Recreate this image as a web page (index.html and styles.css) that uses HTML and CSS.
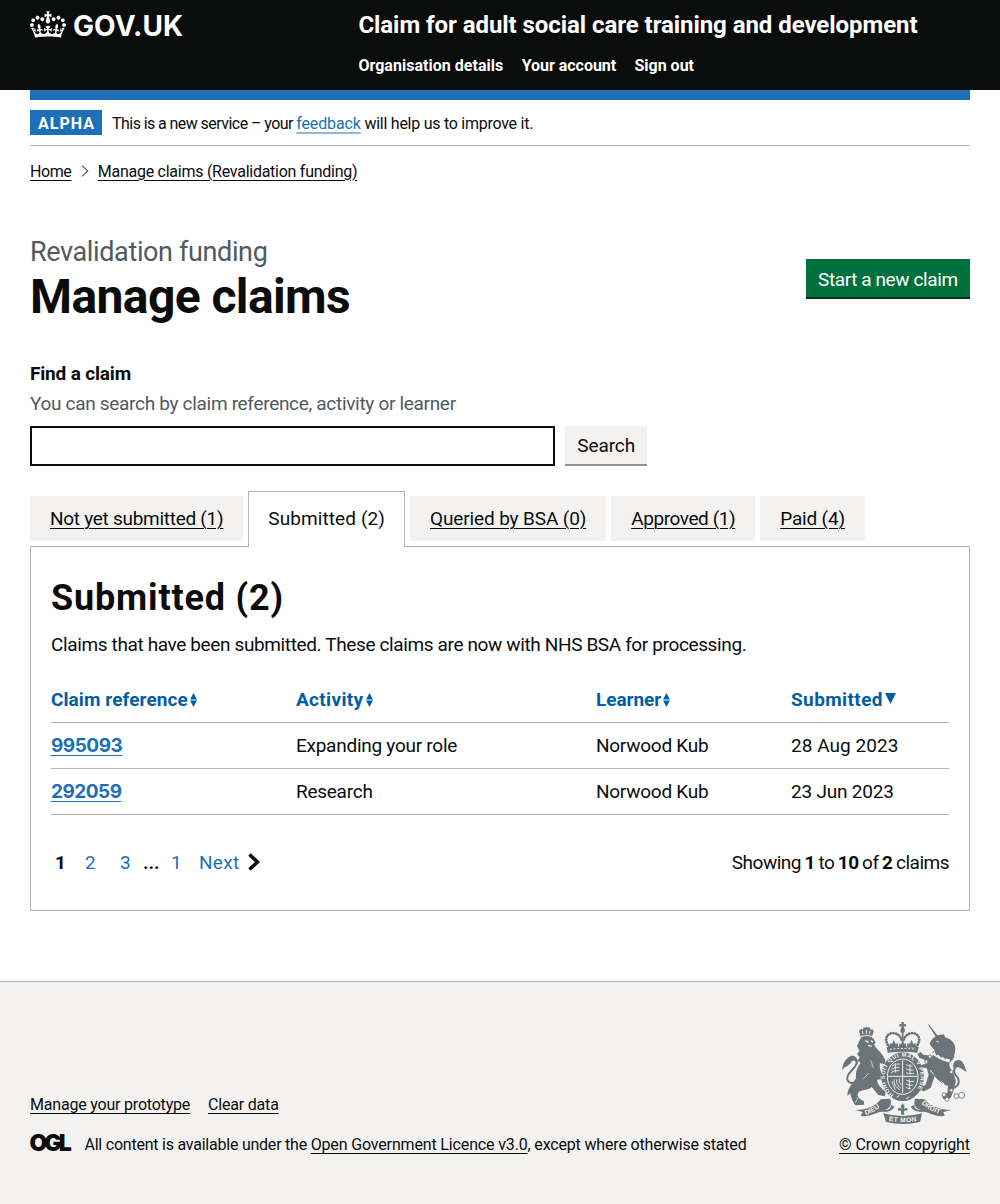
FILE: index.html
```html
<!DOCTYPE html>
<html lang="en">
<head>
<meta charset="utf-8">
<title>Manage claims</title>
<link rel="stylesheet" href="styles.css">
</head>
<body>
<header class="header">
  <div class="wrap header-inner">
    <a class="logo" href="#">
      <svg class="crown" viewBox="0 0 132 97" aria-hidden="true"><path d="M25 30.2c3.5 1.5 7.7-.2 9.1-3.7 1.5-3.6-.2-7.8-3.9-9.2-3.6-1.4-7.6.3-9.1 3.9-1.4 3.5.3 7.5 3.9 9zM9 39.5c3.6 1.5 7.8-.2 9.2-3.7 1.5-3.6-.2-7.8-3.9-9.1-3.6-1.5-7.6.2-9.1 3.8-1.4 3.5.3 7.5 3.8 9zM4.4 57.2c3.5 1.5 7.7-.2 9.1-3.8 1.5-3.6-.2-7.7-3.9-9.1-3.5-1.5-7.6.3-9.1 3.8-1.4 3.5.3 7.6 3.9 9.1zm38.3-21.4c3.5 1.5 7.7-.2 9.1-3.8 1.5-3.6-.2-7.7-3.9-9.1-3.6-1.5-7.6.3-9.1 3.8-1.3 3.6.4 7.7 3.9 9.1zm64.4-5.6c-3.6 1.5-7.8-.2-9.1-3.7-1.5-3.6.2-7.8 3.8-9.2 3.6-1.4 7.7.3 9.2 3.9 1.3 3.5-.4 7.5-3.9 9zm15.9 9.3c-3.6 1.5-7.7-.2-9.1-3.7-1.5-3.6.2-7.8 3.7-9.1 3.6-1.5 7.7.2 9.2 3.8 1.5 3.5-.3 7.5-3.8 9zm4.7 17.7c-3.6 1.5-7.8-.2-9.2-3.8-1.5-3.6.2-7.7 3.9-9.1 3.6-1.5 7.7.3 9.2 3.8 1.3 3.5-.4 7.6-3.9 9.1zM89.3 35.8c-3.6 1.5-7.8-.2-9.2-3.8-1.4-3.6.2-7.7 3.9-9.1 3.6-1.5 7.7.3 9.2 3.8 1.4 3.6-.3 7.7-3.9 9.1zM69.7 17.7l8.9 4.7V9.3l-8.9 2.8c-.2-.3-.5-.6-.9-.9L72.4 0H59.6l3.5 11.2c-.3.3-.6.5-.9.9l-8.8-2.8v13.1l8.8-4.7c.3.3.6.7.9.9l-5 15.4v.1c-.2.8-.4 1.6-.4 2.4 0 4.1 3.1 7.5 7 8.1h.2c.3 0 .7.1 1 .1.4 0 .7 0 1-.1h.2c4-.6 7.1-4.1 7.1-8.1 0-.8-.1-1.7-.4-2.4V34l-5.1-15.4c.4-.2.7-.6 1-.9zM66 92.8c16.9 0 32.8 1.1 47.1 3.2 4-16.9 8.9-26.7 14-33.5l-9.6-3.4c1 4.9 1.1 7.2 0 10.2-1.5-1.4-3-4.3-4.2-8.7L108.6 76c2.8-2 5-3.2 7.5-3.3-4.4 9.4-10 11.9-13.6 11.2-4.3-.8-6.3-4.6-5.6-7.9 1-4.7 5.7-5.9 8-.5 4.3-8.7-3-11.4-7.6-8.8 7.1-7.2 7.9-13.5 2.1-21.1-8 6.1-8.1 12.3-4.5 20.8-4.7-5.4-12.1-2.5-9.5 6.2 3.4-5.2 7.9-2 7.2 3.1-.6 4.3-6.4 7.8-13.5 7.2-10.3-.9-10.9-8-11.2-13.8 2.5-.5 7.1 1.8 11 7.3L80.2 60c-4.1 4.4-8 5.3-12.3 5.4 1.4-4.4 8-11.6 8-11.6H55.5s6.4 7.2 7.9 11.6c-4.2-.1-8-1-12.3-5.4l1.4 16.4c3.9-5.5 8.5-7.7 10.9-7.3-.3 5.8-.9 12.8-11.1 13.8-7.2.6-12.9-2.9-13.5-7.2-.7-5 3.8-8.3 7.1-3.1 2.7-8.7-4.6-11.6-9.4-6.2 3.7-8.5 3.6-14.7-4.6-20.8-5.8 7.6-5 13.9 2.2 21.1-4.7-2.6-11.9.1-7.7 8.8 2.3-5.5 7.1-4.2 8.1.5.7 3.3-1.3 7.1-5.7 7.9-3.5.7-9-1.8-13.5-11.2 2.5.1 4.7 1.3 7.5 3.3l-4.7-15.4c-1.2 4.4-2.7 7.2-4.3 8.7-1.1-3-.9-5.3 0-10.2l-9.5 3.4c5 6.9 9.9 16.7 14 33.5 14.8-2.1 30.8-3.2 47.7-3.2z"/></svg>
      <span class="logo-text">GOV.UK</span>
    </a>
    <div class="header-content">
      <a class="service-name" href="#">Claim for adult social care training and development</a>
      <nav class="header-nav"><a class="nav-org" href="#">Organisation details</a><a class="nav-account" href="#">Your account</a><a class="nav-out" href="#">Sign out</a></nav>
    </div>
  </div>
</header>

<div class="wrap">
  <div class="phase-banner">
    <strong class="tag">ALPHA</strong>
    <span class="phase-text"><span class="phase-intro">This is a new service – your </span><a class="feedback" href="#">feedback</a> will help us to improve it.</span>
  </div>
  <nav class="breadcrumbs">
    <a class="crumb-home" href="#">Home</a>
    <svg class="crumb-arrow" viewBox="0 0 8 12" aria-hidden="true"><path d="M1 .6 6.8 6 1 11.4"/></svg>
    <a class="crumb-page" href="#">Manage claims (Revalidation funding)</a>
  </nav>

  <main>
    <div class="title-row">
      <h1><span class="caption">Revalidation funding</span>Manage claims</h1>
      <a class="button start" href="#">Start a new claim</a>
    </div>

    <form class="search">
      <label for="q">Find a claim</label>
      <div class="hint">You can search by claim reference, activity or learner</div>
      <div class="search-row">
        <input id="q" type="text">
        <button class="button secondary" type="button">Search</button>
      </div>
    </form>

    <ul class="tabs">
      <li class="tab"><a class="t-draft" href="#">Not yet submitted (1)</a></li>
      <li class="tab selected"><a class="t-submitted" href="#">Submitted (2)</a></li>
      <li class="tab"><a class="t-queried" href="#">Queried by BSA (0)</a></li>
      <li class="tab"><a class="t-approved" href="#">Approved (1)</a></li>
      <li class="tab"><a class="t-paid" href="#">Paid (4)</a></li>
    </ul>

    <section class="panel">
      <h2>Submitted (2)</h2>
      <p class="intro">Claims that have been submitted. These claims are now with NHS BSA for processing.</p>
      <table>
        <colgroup><col class="c-ref"><col class="c-activity"><col class="c-learner"><col></colgroup>
        <thead>
          <tr>
            <th class="h-ref">Claim reference<svg class="sort" viewBox="0 0 7 14"><path d="M3.5 0 6.9 6.4H.1zM3.5 14 .1 7.6h6.8z"/></svg></th>
            <th class="h-activity">Activity<svg class="sort" viewBox="0 0 7 14"><path d="M3.5 0 6.9 6.4H.1zM3.5 14 .1 7.6h6.8z"/></svg></th>
            <th class="h-learner">Learner<svg class="sort" viewBox="0 0 7 14"><path d="M3.5 0 6.9 6.4H.1zM3.5 14 .1 7.6h6.8z"/></svg></th>
            <th class="h-submitted">Submitted<svg class="sorted" viewBox="0 0 11 11"><path d="M0 0h11L5.5 11z"/></svg></th>
          </tr>
        </thead>
        <tbody>
          <tr><td><a class="ref" href="#">995093</a></td><td>Expanding your role</td><td>Norwood Kub</td><td class="date">28 Aug 2023</td></tr>
          <tr><td><a class="ref" href="#">292059</a></td><td>Research</td><td>Norwood Kub</td><td class="date june">23 Jun 2023</td></tr>
        </tbody>
      </table>
      <div class="pagination">
        <nav class="pages"><b class="pg current">1</b><a class="pg two" href="#">2</a><a class="pg three" href="#">3</a><b class="pg dots">...</b><a class="pg last" href="#">1</a><a class="pg next" href="#">Next</a><svg class="chevron" viewBox="0 0 12 18"><path d="M1.5 1.5 9.5 9l-8 7.5"/></svg></nav>
        <div class="results">Showing <b>1</b> to <b>10</b> of <b>2</b> claims</div>
      </div>
    </section>
  </main>
</div>

<footer class="footer">
  <div class="wrap footer-inner">
    <div class="footer-meta">
      <div class="footer-links"><a class="f-manage" href="#">Manage your prototype</a><a class="f-clear" href="#">Clear data</a></div>
      <div class="licence">
        <svg class="ogl" viewBox="0 0 42 18"><text x="-0.5" y="17">OGL</text></svg>
        <span class="licence-text"><span class="l-a">All content is available under the </span><a class="l-b" href="#">Open Government Licence v3.0</a><span class="l-c">, except where otherwise stated</span></span>
      </div>
    </div>
    <div class="crown-copyright">
      <svg class="crest" viewBox="36 36 375 306" aria-hidden="true">
        <defs>
          <path id="garter" d="M191 254A54 61 0 1 1 245 254"/>
          <path id="dieu" d="M107 315Q137 304 160 284"/>
          <path id="etmon" d="M176 332Q218 341 262 332"/>
          <path id="droit" d="M274 281Q301 305 342 316"/>
        </defs>
        <!-- lion -->
        <path class="g" d="M92 82l-5-20 6-6 5 3 3-7 5 1 3-4 4 4 6-1 3 7 6-1 3 6-6 19z"/>
        <path class="cut" stroke-width="3" d="M97 63l2 9M109 60v12M120 63l-2 9M92 79q18-5 36 0"/>
        <path class="g" d="M92 84C97 78 124 77 131 86l6 12-5 5 5 9c9 10 22 22 29 38l-1 13-15-3c-3 12 2 28 10 34l10 10-3 8-14-4-12 1c2 14 10 24 26 36l-2 14-20-4-20-24c-8 9-26 8-38 14-8 10-4 20 14 28l2 11-27 2c-9-12-13-24-15-36l-9 8c0-28 20-40 26-54-2-18 4-34 14-44l-9-8 6-10-8-10 7-10-7-14z"/>
        <path class="line" stroke-width="6" d="M82 214C60 226 46 212 54 196C60 182 84 170 80 152"/>
        <path class="g" d="M37 179C36 158 54 136 69 137C82 140 86 152 81 164C78 152 70 148 64 156C58 168 48 166 37 179z"/>
        <path class="cut" stroke-width="4" d="M106 92l10 5M123 92l6 4M114 106l12 3"/>
        <path class="cut" stroke-width="2" d="M100 206l16-16M122 150l8 24M84 262l-8 16"/>
        <!-- unicorn -->
        <path class="g" d="M293 42l4 2 34 42-7 5zM305 111l-6-10c4-12 16-24 29-26l14-2 3 9c20 5 32 20 31 36l-4 24c-4 8-8 12-14 16-2 14 10 26 14 36l6 20-8 28-8 22-22 4-4-12 16-8 2-20c-16-6-32-18-40-30l-12 36-20 10-14-4 2-10 16-4 10-32-6-20c-12-4-20 4-22 14l-12-2-8-14 4-12 8-6 6 14 18-6 12-4-16-10-12-4-6-12 10-6 8 8 26 4c8-2 12-8 10-16l-6-6z"/>
        <path class="cut" stroke-width="9" d="M305 126q22 20 54 27"/>
        <path class="line" stroke-width="3" d="M309 127l6-5 5 13 8-7 5 14 9-7 4 12"/>
        <path class="line" stroke-width="6" d="M366 234C392 230 390 206 376 194C368 184 374 166 388 166"/>
        <path class="g" d="M372 178C364 160 376 148 388 150C402 154 404 172 411 186C398 180 392 174 386 172C378 170 376 172 372 178z"/>
        <path class="cut" stroke-width="3" d="M319 94l7 2M334 214l8 8M300 180l12 14"/>
        <g class="ring"><circle cx="342" cy="254" r="6"/><circle cx="351" cy="268" r="6"/><circle cx="379" cy="258" r="7"/><circle cx="395" cy="256" r="9"/><circle cx="364" cy="241" r="5"/><circle cx="289" cy="155" r="5"/><circle cx="300" cy="140" r="5"/><circle cx="364" cy="186" r="5"/></g>
        <!-- royal crown -->
        <path class="g" d="M214 36h8l-1 7 7-1v8l-7-1 2 8h-10l2-8-7 1v-8l7 1z"/>
        <circle class="g" cx="218" cy="62" r="7"/>
        <path class="beads" d="M178 111C156 84 176 66 194 70C206 72 213 82 216 92M258 111C280 84 260 66 242 70C230 72 223 82 220 92"/>
        <path class="line" stroke-width="5" d="M218 68v42"/>
        <path class="g" d="M173 128l-3-17 96 0-4 17q-44-6-89 0zM178 112l2-13 6 4 5-13 6 12 7-3 1 13zM258 112l-2-13-6 4-5-13-6 12-7-3-1 13zM206 112l3-12 5 3 4-12 4 12 5-3 3 12z"/>
        <path class="cut" stroke-width="3" stroke-dasharray="6 5" d="M180 118q38-5 78 0"/>
        <!-- garter and shield -->
        <ellipse class="g" cx="218" cy="200" rx="64" ry="73"/>
        <ellipse class="cut" stroke-width="3" cx="218" cy="200" rx="46" ry="53"/>
        <path class="cut" stroke-width="3" d="M218 151v98M174 199h88"/>
        <g class="cut" stroke-width="2.6">
          <path d="M186 168q10-8 24-6M184 178q10-8 24-6M182 188q10-8 26-6M228 164q8 6 20 4M228 176q8 6 22 4M228 188q8 6 24 2M192 208q-2 20 18 32M200 208q-2 18 12 26M208 206q-2 12 6 20M186 214l10 26M228 210q10 8 24 4M228 221q10 8 20 4M228 232q8 6 14 4"/>
          <path d="M196 160v28M240 162v30M238 208v30"/>
        </g>
        <text class="motto"><textPath href="#garter" textLength="278">HONI SOIT QUI MAL Y PENSE</textPath></text>
        <path class="cut" stroke-width="3" d="M200 262l8-6M228 266l10-5"/>
        <!-- ribbons -->
        <path class="g" d="M76 300C110 300 136 290 152 268L180 266C188 280 180 296 162 300C182 300 184 290 182 284L194 290C184 304 174 304 164 306C140 300 130 322 92 318L98 306z"/>
        <path class="g" d="M364 300C330 300 300 290 284 268L256 266C248 280 256 296 274 300C254 300 252 290 254 284L242 290C252 304 262 304 272 306C296 300 306 322 344 318L340 306z"/>
        <path class="g" d="M160 310Q218 326 276 310L270 336Q218 348 168 336z"/>
        <path class="g" d="M218 280l6 9-3 10c4-8 12-8 12 0-2 4-5 4-7 2l-4 4 1 9h-10l1-9-4-4c-2 2-6 2-7-2 0-8 9-8 12 0l-3-10z"/>
        <text class="scroll"><textPath href="#dieu">DIEU</textPath></text>
        <text class="scroll"><textPath href="#etmon" textLength="84">ET MON</textPath></text>
        <text class="scroll"><textPath href="#droit">DROIT</textPath></text>
      </svg>
      <a class="copyright" href="#">© Crown copyright</a>
    </div>
  </div>
</footer>
</body>
</html>
```
FILE: styles.css
```css
* { box-sizing: border-box; }

body {
  margin: 0;
  color: #0b0c0c;
  background: #fff;
  font: 19px/25px Roboto, "Liberation Sans", sans-serif;
  letter-spacing: -0.26px;
}

a {
  color: inherit;
  text-decoration: underline;
  text-decoration-thickness: 1px;
  text-underline-offset: 3px;
}

.wrap { margin: 0 30px; }

/* Header */
.header { height: 90px; background: #0b0c0c; color: #fff; }
.header a { text-decoration: none; }
.header-inner { display: flex; padding-top: 10px; }
.logo { display: flex; width: 328.4px; height: 30px; }
.crown { width: 36px; height: 27px; margin-top: 0.5px; fill: #fff; }
.logo-text { margin-left: 7px; font: 700 28px/32px Inter, sans-serif; letter-spacing: 0.1px; }
.header-content { display: flex; flex-direction: column; }
.service-name { font-size: 24px; font-weight: 700; line-height: 30px; letter-spacing: -0.06px; }
.header-nav { display: flex; gap: 18.3px; margin-top: 16px; font-size: 16px; font-weight: 700; line-height: 20px; letter-spacing: 0; }
.nav-org { letter-spacing: 0.03px; }
.nav-account { letter-spacing: -0.03px; }

/* Phase banner and breadcrumbs */
.phase-banner {
  display: flex;
  align-items: center;
  height: 56px;
  border-top: 10px solid #1d70b8;
  border-bottom: 1px solid #b1b4b6;
  font-size: 16px;
}
.tag {
  width: 72px;
  height: 25px;
  margin-right: 10px;
  padding-left: 8px;
  background: #1d70b8;
  color: #fff;
  line-height: 27px;
  letter-spacing: 1px;
}
.phase-text { padding-top: 1px; white-space: pre; }
.phase-intro { letter-spacing: -0.54px; word-spacing: -0.1px; }
.feedback {
  color: #1d70b8;
  letter-spacing: -0.13px;
  text-decoration-color: #8eb7db;
  text-decoration-thickness: 2px;
}
.breadcrumbs { display: flex; align-items: center; height: 20px; margin-top: 15px; font-size: 16px; }
.crumb-home { letter-spacing: -0.4px; }
.crumb-page { letter-spacing: -0.26px; }
.crumb-arrow { width: 8px; height: 12px; margin: 0 9px 0 9.3px; fill: none; stroke: #505a5f; stroke-width: 1.1; }

/* Title */
.title-row { display: flex; justify-content: space-between; margin-top: 56px; }
h1 { margin: 0; font-size: 48px; font-weight: 700; line-height: 50px; letter-spacing: -0.6px; }
.caption { display: block; margin-bottom: 5px; color: #505a5f; font-size: 27px; font-weight: 400; line-height: 30px; letter-spacing: -0.37px; }
.button { display: block; border: 0; font: 19px/19px Roboto, sans-serif; text-decoration: none; white-space: nowrap; }
.start {
  width: 164px;
  height: 38px;
  margin-top: 22px;
  padding: 11px 0 0 12px;
  background: #00703c;
  box-shadow: 0 2px 0 #002d18;
  color: #fff;
  letter-spacing: -0.4px;
}

/* Search */
.search { margin-top: 39px; }
.search label { display: block; font-weight: 700; letter-spacing: -0.17px; }
.hint { margin: 5px 0 10px; color: #505a5f; letter-spacing: -0.31px; }
.search-row { display: flex; gap: 10px; }
.search-row input { width: 525.4px; height: 40px; border: 2px solid #0b0c0c; border-radius: 0; }
.secondary {
  width: 81.5px;
  height: 38px;
  padding: 0;
  background: #f3f2f1;
  box-shadow: 0 2px 0 #929191;
  color: #0b0c0c;
  letter-spacing: -0.1px;
}

/* Tabs */
.tabs { display: flex; gap: 5px; align-items: flex-start; height: 55px; margin: 25px 0 0; padding: 0; list-style: none; }
.tab { height: 45px; margin-top: 5px; padding: 10px 20px; background: #f3f2f1; line-height: 26px; white-space: nowrap; }
.tab.selected { position: relative; height: 56px; margin-top: 0; padding: 14px 19px; border: 1px solid #b1b4b6; border-bottom: 0; background: #fff; }
.selected a { text-decoration: none; }
.t-draft { letter-spacing: -0.28px; }
.t-submitted { letter-spacing: 0.1px; }
.t-queried { letter-spacing: -0.13px; }
.t-approved { letter-spacing: -0.42px; }
.t-paid { letter-spacing: -0.17px; }

/* Panel */
.panel { height: 365px; padding: 31px 20px; border: 1px solid #b1b4b6; }
h2 { margin: 0; font-size: 36px; line-height: 40px; letter-spacing: 0.83px; }
.intro { margin: 14px 0 20px; letter-spacing: -0.37px; }
table { width: 100%; border-collapse: collapse; table-layout: fixed; }
.c-ref { width: 245px; }
.c-activity { width: 300px; }
.c-learner { width: 195px; }
th, td { height: 46px; padding: 0; border-bottom: 1px solid #b1b4b6; text-align: left; }
th { height: 45px; color: #005ea5; }
.h-ref { letter-spacing: 0.08px; }
.h-activity { letter-spacing: 0.34px; }
.h-learner { letter-spacing: -0.05px; }
.h-submitted { letter-spacing: 0.4px; }
.sort { width: 7px; height: 14px; margin-left: 2px; vertical-align: -1px; fill: #005ea5; }
.sorted { width: 11px; height: 11px; margin-left: 2px; vertical-align: 2px; fill: #005ea5; }
.date { letter-spacing: 0.05px; }
.june { letter-spacing: -0.2px; }
.ref { color: #1d70b8; font-family: Inter, sans-serif; font-weight: 700; letter-spacing: -0.5px; }

.pagination { display: flex; justify-content: space-between; margin-top: 35px; }
.pages { display: flex; align-items: center; padding-left: 4px; }
.pages a { color: #1d70b8; text-decoration: none; }
.current { width: 30px; }
.two { width: 35px; }
.three { width: 23px; }
.dots { width: 28px; letter-spacing: 0; }
.last { width: 28px; }
.next { width: 48px; letter-spacing: 0.31px; }
.chevron { width: 12px; height: 18px; margin-left: 0.5px; fill: none; stroke: #0b0c0c; stroke-width: 3.6; }
.results { letter-spacing: -0.5px; word-spacing: -0.7px; }

/* Footer */
.footer { height: 223px; margin-top: 70px; border-top: 1px solid #b1b4b6; background: #f3f2f1; font-size: 16px; line-height: 20px; }
.footer-inner { display: flex; justify-content: space-between; align-items: flex-end; height: 173px; }
.footer-links { display: flex; gap: 18px; letter-spacing: -0.2px; }
.licence { display: flex; margin-top: 20px; }
.ogl { width: 42px; height: 18px; margin: -1px 12.5px 0 0; overflow: visible; fill: #0b0c0c; font: 900 23px Inter, sans-serif; letter-spacing: -3px; }
.licence-text { white-space: pre; letter-spacing: -0.17px; }
.l-a { letter-spacing: -0.23px; }
.l-b { letter-spacing: -0.15px; }
.crown-copyright { display: flex; flex-direction: column; align-items: flex-end; }
.crest { width: 125px; height: 102px; margin: 0 3px 11px 0; }
.copyright { letter-spacing: -0.09px; }

/* Royal arms */
.g { fill: #6b7478; }
.cut { fill: none; stroke: #f3f2f1; }
.line { fill: none; stroke: #6b7478; stroke-linecap: round; }
.ring { fill: #f3f2f1; stroke: #6b7478; stroke-width: 2.5; }
.beads { fill: none; stroke: #6b7478; stroke-width: 8.5; stroke-linecap: round; stroke-dasharray: 0.1 8; }
.motto { fill: #f3f2f1; font: 700 17px "Liberation Sans", sans-serif; letter-spacing: 0; }
.scroll { fill: #f3f2f1; font: 700 20px "Liberation Sans", sans-serif; letter-spacing: 0; }
```
